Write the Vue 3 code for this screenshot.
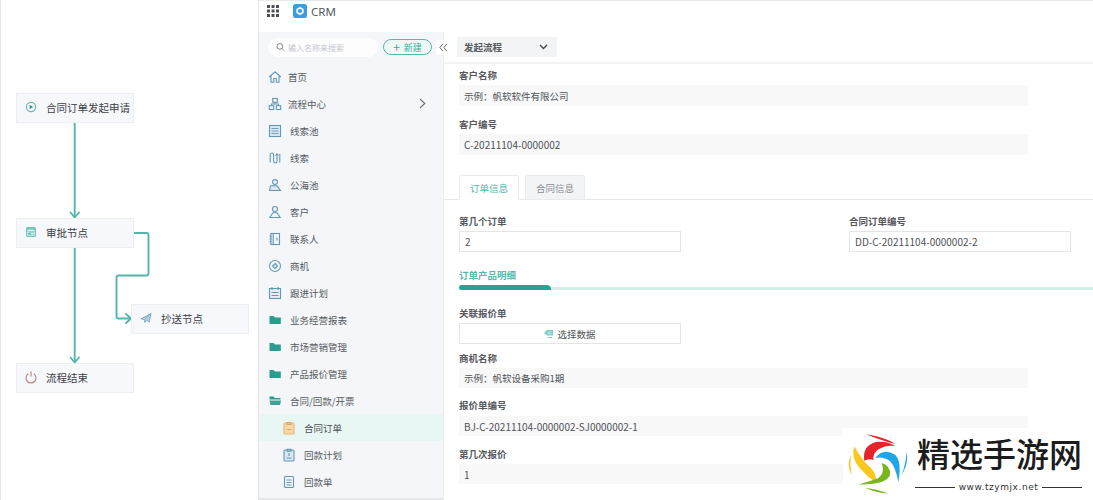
<script setup>
const menu = [
  { label: '首页', icon: 'home' },
  { label: '流程中心', icon: 'flow', arrow: true },
  { label: '线索池', icon: 'pool', wide: true },
  { label: '线索', icon: 'lead', wide: true },
  { label: '公海池', icon: 'sea', wide: true },
  { label: '客户', icon: 'user', wide: true },
  { label: '联系人', icon: 'book', wide: true },
  { label: '商机', icon: 'chance', wide: true },
  { label: '跟进计划', icon: 'plan', wide: true },
  { label: '业务经营报表', icon: 'folder', wide: true },
  { label: '市场营销管理', icon: 'folder', wide: true },
  { label: '产品报价管理', icon: 'folder', wide: true },
  { label: '合同/回款/开票', icon: 'folderOpen', wide: true },
  { label: '合同订单', icon: 'order', sub: true, active: true },
  { label: '回款计划', icon: 'clip', sub: true },
  { label: '回款单', icon: 'doc', sub: true }
]
</script>

<template>
  <div class="page">
    <section class="flow">
      <svg class="edges" width="258" height="500" viewBox="0 0 258 500" fill="none">
        <g stroke="#55b5ad" stroke-width="1.900" stroke-linejoin="round" stroke-linecap="round">
          <path d="M74.700 122V217" />
          <path d="M70.500 212.500L74.700 217.500L79 212.500" />
          <path d="M74.700 248V362" />
          <path d="M70.500 357.500L74.700 362.500L79 357.500" />
          <path d="M134 233H146.500Q148.500 233 148.500 235V273.500Q148.500 275.500 146.500 275.500H118.500Q116.500 275.500 116.500 277.500V316.500Q116.500 318.500 118.500 318.500H130" />
          <path d="M126 314L131 318.500L126 323" />
        </g>
      </svg>
      <div class="node n1">
        <svg width="14" height="14" viewBox="0 0 14 14" fill="none"><circle cx="7" cy="7" r="4.600" stroke="#68b9b4" stroke-width="1.200"/><path d="M5.600 4.700L9.300 7L5.600 9.300Z" fill="#3d8f9f"/></svg>
        <span>合同订单发起申请</span>
      </div>
      <div class="node n2">
        <svg width="14" height="14" viewBox="0 0 14 14" fill="none"><rect x="2" y="2" width="10" height="10" rx="1.500" fill="#72c5bb"/><path d="M3.500 5.300H10.500M7 8.800H10" stroke="#fff" stroke-width="1.100"/><rect x="3.500" y="7" width="7" height="3.500" stroke="#fff" stroke-width=".6"/></svg>
        <span>审批节点</span>
      </div>
      <div class="node n3">
        <svg width="14" height="14" viewBox="0 0 14 14" fill="none"><path d="M2 7.800L12 2.500L10.300 11L7.300 9.300L5.800 11.500L5.300 8.700Z" fill="#b6d2df" stroke="#6f9fb8" stroke-width=".8"/><path d="M5.300 8.700L12 2.500" stroke="#6f9fb8" stroke-width=".7"/></svg>
        <span>抄送节点</span>
      </div>
      <div class="node n4">
        <svg width="14" height="14" viewBox="0 0 14 14" fill="none"><path d="M4.200 3.800A5 5 0 1 0 9.800 3.800" stroke="#b98d88" stroke-width="1.200"/><path d="M7 1.500V6.500" stroke="#b98d88" stroke-width="1.200"/></svg>
        <span>流程结束</span>
      </div>
    </section>

    <div class="app">
      <header class="top">
        <svg class="grid" width="12" height="12" viewBox="0 0 12 12" fill="#4a4f57">
          <rect x="0" y="0" width="3" height="3"/><rect x="4.500" y="0" width="3" height="3"/><rect x="9" y="0" width="3" height="3"/>
          <rect x="0" y="4.500" width="3" height="3"/><rect x="4.500" y="4.500" width="3" height="3"/><rect x="9" y="4.500" width="3" height="3"/>
          <rect x="0" y="9" width="3" height="3"/><rect x="4.500" y="9" width="3" height="3"/><rect x="9" y="9" width="3" height="3"/>
        </svg>
        <svg class="brand" width="14" height="14" viewBox="0 0 14 14"><rect width="14" height="14" rx="2.500" fill="#3d9ce0"/><path d="M7 2.800L10.700 4.900V9.100L7 11.200L3.300 9.100V4.900Z" fill="#eaf5fd"/><circle cx="7" cy="7" r="2.100" fill="#3d9ce0"/></svg>
        <span class="crm">CRM</span>
      </header>

      <div class="body">
        <aside class="side">
          <div class="tools">
            <div class="search">
              <svg width="9" height="10" viewBox="0 0 10 10" fill="none"><circle cx="4.300" cy="4.300" r="3.200" stroke="#777" stroke-width="1"/><path d="M6.700 6.700L9 9" stroke="#777"/></svg>
              <span>输入名称来搜索</span>
            </div>
            <div class="new">
              <span class="plus">+</span><span>新建</span>
            </div>
          </div>
          <ul class="menu">
            <li v-for="m in menu" :key="m.label" :class="{ sub: m.sub, active: m.active, wide: m.wide }">
              <svg class="ico" width="14" height="14" viewBox="0 0 14 14" fill="none" stroke="#6398b3" stroke-width="1.100">
                <template v-if="m.icon === 'home'"><path d="M1.200 7L7 1.800L12.800 7M3 5.800V12.300H5.700V8.500H8.300V12.300H11V5.800"/></template>
                <template v-else-if="m.icon === 'flow'"><rect x="4.700" y="1.500" width="4.600" height="3.800" /><rect x="1.300" y="8.700" width="4.400" height="3.800"/><rect x="8.300" y="8.700" width="4.400" height="3.800"/><path d="M7 5.300V7H3.500V8.700M7 7H10.500V8.700"/></template>
                <template v-else-if="m.icon === 'pool'"><rect x="1.500" y="1.500" width="11" height="11" fill="#dce7f0"/><path d="M3.500 4.500H10.500M3.500 7H10.500M3.500 9.500H10.500" stroke-width=".9"/></template>
                <template v-else-if="m.icon === 'lead'"><path d="M2.200 11.500V4Q2.200 2 3.900 2T5.600 4V10Q5.600 12 7.300 12T9 10V3"/><path d="M7.500 4.500L9 2.800L10.500 4.500M11.800 3V11.500" /></template>
                <template v-else-if="m.icon === 'sea'"><circle cx="7" cy="4" r="2.400"/><path d="M2.500 7.800H9L12.500 12.500H1.500Z" fill="#dce7f0"/></template>
                <template v-else-if="m.icon === 'user'"><circle cx="7" cy="4" r="2.500"/><path d="M1.800 12.500L5 7.800H9L12.200 12.500Z"/></template>
                <template v-else-if="m.icon === 'book'"><rect x="2.800" y="1.500" width="8.700" height="11"/><path d="M5.200 1.500V12.500M1.500 4.200H3.800M1.500 7H3.800M1.500 9.800H3.800M9 5.500V8.500"/></template>
                <template v-else-if="m.icon === 'chance'"><circle cx="7" cy="7" r="5.500"/><path d="M7 4.500L9.500 7L7 9.500L4.500 7Z" fill="#dce7f0"/></template>
                <template v-else-if="m.icon === 'plan'"><rect x="1.500" y="2.500" width="11" height="10" fill="#e6eef4"/><path d="M4 1V4M10 1V4M3.500 6.500H10.500M3.500 9.500H10.500"/></template>
                <template v-else-if="m.icon === 'folder'"><path d="M1.500 3H5.500L7 4.500H12.800V11H1.500Z" fill="#2b9c8e" stroke="none"/></template>
                <template v-else-if="m.icon === 'folderOpen'"><path d="M1.500 2.500H5.500L7 4H12.500V5.500H1.500Z" fill="#2b9c8e" stroke="none"/><path d="M1.500 6.500H13L12 11H2.500Z" fill="#3aa597" stroke="none"/></template>
                <template v-else-if="m.icon === 'order'"><rect x="2" y="2" width="10" height="11" rx="1" fill="#f6d9a9" stroke="#eab976"/><path d="M5 1.500H9V3.500H5ZM4.800 8.500H9.200" stroke="#d9a45e"/></template>
                <template v-else-if="m.icon === 'clip'"><rect x="2" y="2" width="10" height="11" rx="1" fill="#dce7f0"/><path d="M5 1.200H9V3.200H5ZM4.500 10H9.500M7 5V8"/></template>
                <template v-else><rect x="2.500" y="1.500" width="9" height="11" rx="1"/><path d="M4.500 5H9.500M4.500 7.500H9.500M4.500 10H9.500"/></template>
              </svg>
              <span class="lbl">{{ m.label }}</span>
              <svg v-if="m.arrow" class="chev" width="7" height="11" viewBox="0 0 7 11" fill="none"><path d="M1 1L5.800 5.500L1 10" stroke="#6b6f75" stroke-width="1.100"/></svg>
            </li>
          </ul>
        </aside>

        <main class="main">
          <span class="collapse">
            <svg width="9" height="9" viewBox="0 0 9 9" fill="none"><path d="M4 .8L.8 4.500L4 8.200M8 .8L4.800 4.500L8 8.200" stroke="#666" stroke-width="1"/></svg>
          </span>
          <div class="bar">
            <div class="select">
              <span>发起流程</span>
              <svg width="9" height="6" viewBox="0 0 9 6" fill="none"><path d="M1 1L4.500 4.500L8 1" stroke="#444" stroke-width="1.300"/></svg>
            </div>
          </div>

          <div class="form">
            <label>客户名称</label>
            <div class="value cjk">示例：帆软软件有限公司</div>
            <label class="next">客户编号</label>
            <div class="value">C-20211104-0000002</div>
          </div>

          <div class="tabs">
            <div class="tab on">订单信息</div>
            <div class="tab">合同信息</div>
          </div>

          <div class="pair">
            <div class="col">
              <label>第几个订单</label>
              <div class="input">2</div>
            </div>
            <div class="col">
              <label>合同订单编号</label>
              <div class="input">DD-C-20211104-0000002-2</div>
            </div>
          </div>

          <div class="detail">
            <div class="detail-title">订单产品明细</div>
            <div class="track"><div class="thumb"></div></div>
          </div>

          <div class="lower">
            <label>关联报价单</label>
            <div class="input pick">
              <svg width="9" height="10" viewBox="0 0 9 10" fill="none"><path d="M0 4L3 1H9V6.500H3Z" fill="#7ccbc2"/><path d="M3.500 3H7.500M3.500 4.800H7.500" stroke="#fff" stroke-width=".6"/><path d="M3.500 8.500H8" stroke="#7ccbc2" stroke-width="1.100"/></svg>
              <span>选择数据</span>
            </div>
            <label class="l2">商机名称</label>
            <div class="value cjk short">示例：帆软设备采购1期</div>
            <label class="l3">报价单编号</label>
            <div class="value short q">BJ-C-20211104-0000002-SJ0000002-1</div>
            <label class="l4">第几次报价</label>
            <div class="value short">1</div>
          </div>
        </main>
      </div>
    </div>

    <div class="mark">
      <svg class="mark-logo" width="61" height="60" viewBox="20 28 184 180">
        <path d="M78 28Q110 42 165 58Q145 40 78 28Z" fill="#e4252b"/>
        <path d="M72 108Q66 62 108 52Q140 48 166 64Q138 60 118 72Q97 84 100 106Q85 100 72 108Z" fill="#e4252b"/>
        <path d="M42 65Q30 100 60 132Q80 155 105 172Q112 150 92 130Q66 108 42 65Z" fill="#f8c81c"/>
        <path d="M33 90Q16 122 35 153Q27 122 33 90Z" fill="#f8c81c"/>
        <path d="M105 100Q130 68 165 90Q186 110 175 172Q166 126 150 110Q130 95 105 100Z" fill="#1ea7e8"/>
        <path d="M200 82Q196 125 185 150Q206 120 200 82Z" fill="#1ea7e8"/>
        <path d="M125 115Q152 124 150 150Q140 182 55 180Q90 170 115 160Q135 145 125 115Z" fill="#7ab51d"/>
        <path d="M75 190Q110 193 145 207Q108 206 75 190Z" fill="#7ab51d"/>
      </svg>
      <div class="mark-text">
        <div class="mark-title">精选手游网</div>
        <div class="mark-url"><i></i><span>www.tzymjx.net</span><i></i></div>
      </div>
    </div>
  </div>
</template>

<style scoped>
.page {
  position: relative;
  width: 1093px;
  height: 500px;
  overflow: hidden;
  display: flex;
  background: #fff;
  color: #4b4f55;
  font-family: "Noto Sans CJK SC", "Noto Sans", sans-serif;
  font-size: 10px;
}
.flow {
  position: relative;
  flex: 0 0 259px;
  box-sizing: border-box;
  border-left: 1px solid #e6e7ea;
  border-right: 1px solid #e4e5e8;
}
.edges { position: absolute; left: -1px; top: 0; }
.node {
  position: absolute;
  box-sizing: border-box;
  width: 118px;
  height: 30px;
  padding: 0 0 2px 7px;
  display: flex;
  align-items: center;
  gap: 8px;
  background: #f6f8fb;
  border: 1px solid #eceef2;
  font-size: 10.500px;
  color: #3d4046;
  white-space: nowrap;
}
.n1 { left: 15px; top: 93px; }
.n2 { left: 15px; top: 218px; }
.n3 { left: 130px; top: 304px; }
.n4 { left: 15px; top: 363px; }

.app { flex: 1; display: flex; flex-direction: column; min-width: 0; }
.top {
  height: 32px;
  box-sizing: border-box;
  display: flex;
  align-items: flex-start;
  padding: 4px 0 0 8px;
  border-top: 1px solid #e9eaec;
  flex: none;
}
.brand { margin-left: 14px; margin-top: -1px; }
.crm { margin-left: 4px; font-size: 11.500px; line-height: 13px; color: #55595f; font-family: "Noto Sans", sans-serif; }
.body { flex: 1; display: flex; min-height: 0; }

.side {
  flex: 0 0 184px;
  background: #f4f6f9;
  box-sizing: border-box;
  padding-top: 5px;
  border-bottom: 2px solid #e4e6e9;
}
.tools { display: flex; align-items: center; height: 20px; padding-left: 9px; }
.search {
  width: 110px;
  height: 19px;
  border-radius: 10px;
  background: #fdfdfe;
  display: flex;
  align-items: center;
  gap: 3px;
  padding-left: 8px;
  box-sizing: border-box;
  color: #c3c7cc;
  font-size: 8px;
}
.new {
  margin-left: 5px;
  width: 49px;
  height: 16px;
  box-sizing: border-box;
  border: 1px solid #5fb5aa;
  border-radius: 9px;
  background: #eef8f6;
  display: flex;
  align-items: center;
  justify-content: center;
  gap: 4px;
  font-size: 9px;
  color: #3da99b;
}
.plus { font-size: 12px; line-height: 12px; }
.menu { list-style: none; margin: 6px 0 0; padding: 0; }
.menu li {
  position: relative;
  height: 27px;
  display: flex;
  align-items: center;
  padding-left: 9px;
  font-size: 9.500px;
  color: #555a60;
}
.menu li .lbl { margin-left: 6px; }
.menu li.wide .lbl { margin-left: 8px; }
.menu li.sub { padding-left: 23px; }
.menu li.sub .lbl { margin-left: 8px; }
.menu li.active { background: #e8f6f4; color: #4b4f55; }
.chev { position: absolute; left: 160px; top: 8px; }

.main { position: relative; flex: 1; min-width: 0; border-left: 1px solid #edeef0; }
.collapse {
  position: absolute;
  left: -8px;
  top: 8px;
  width: 15px;
  height: 15px;
  background: #fff;
  display: flex;
  align-items: center;
  justify-content: center;
}
.bar {
  height: 32px;
  box-sizing: border-box;
  padding: 5px 0 0 13px;
  border-bottom: 2px solid #f2f3f4;
}
.select {
  width: 100px;
  height: 20px;
  box-sizing: border-box;
  padding: 0 7px;
  display: flex;
  align-items: center;
  justify-content: space-between;
  background: #f3f4f5;
  font-size: 9.500px;
  font-weight: 700;
  color: #55585d;
}
.select svg { margin-right: 2px; }

label { display: block; font-size: 9.500px; font-weight: 700; color: #55585d; line-height: 14px; }
.form { padding: 4px 0 0 15px; height: 111px; box-sizing: border-box; }
.form .next { margin-top: 11px; }
.value {
  width: 569px;
  height: 21px;
  margin-top: 3px;
  padding-left: 5px;
  display: flex;
  align-items: center;
  box-sizing: border-box;
  background: #f8f8f8;
  font-size: 10px;
  color: #4f5358;
}
.value.cjk { font-size: 9.500px; }

.tabs {
  display: flex;
  gap: 6px;
  height: 24px;
  padding-left: 15px;
  border-bottom: 1px solid #e6e8ea;
}
.tab {
  width: 60px;
  height: 25px;
  box-sizing: border-box;
  border: 1px solid #e8eaec;
  background: #f3f4f6;
  display: flex;
  align-items: center;
  justify-content: center;
  color: #8a8e94;
  font-size: 9.500px;
  border-radius: 2px 2px 0 0;
}
.tab.on { background: #fff; border-bottom-color: #fff; color: #4fb6a9; }

.pair { display: flex; padding: 14px 0 0 15px; height: 68px; box-sizing: border-box; }
.col { flex: none; width: 390px; }
.input {
  height: 21px;
  width: 222px;
  margin-top: 3px;
  box-sizing: border-box;
  border: 1px solid #e3e5e8;
  display: flex;
  align-items: center;
  padding-left: 5px;
  font-size: 10px;
  color: #4f5358;
}
.detail { padding-left: 15px; }
.detail-title { font-size: 9.500px; font-weight: 700; color: #5db6ab; line-height: 14px; }
.track { height: 5px; margin-top: 3px; background: linear-gradient(transparent 2px, #d3efea 2px); }
.thumb { width: 92px; height: 5px; background: #26a594; border-radius: 3px 5px 0 3px; }

.lower { padding: 16px 0 0 15px; }
.pick { justify-content: center; gap: 4px; padding-left: 0; font-size: 9.500px; }
.l2 { margin-top: 7px; }
.l3 { margin-top: 10px; }
.l4 { margin-top: 11px; }
.lower .value { margin-top: 3px; }
.value.short { height: 20px; }
.lower .value.q { margin-top: 4px; }

.mark {
  position: absolute;
  left: 843px;
  top: 428px;
  width: 250px;
  height: 72px;
  background: #fff;
}
.mark-logo { position: absolute; left: 4px; top: 6px; }
.mark-text { position: absolute; left: 74px; top: 3px; width: 165px; }
.mark-title {
  font-family: "Noto Sans CJK SC", sans-serif;
  font-size: 33px;
  line-height: 44px;
  color: #1c1c1c;
  font-weight: 500;
  white-space: nowrap;
}
.mark-url {
  display: flex;
  align-items: center;
  gap: 4px;
  margin-left: -2px;
  margin-top: 6px;
  font-family: "DejaVu Sans", sans-serif;
  font-size: 9px;
  line-height: 12px;
  color: #333;
  letter-spacing: .55px;
  white-space: nowrap;
}
.mark-url i { flex: 1; height: 1px; background: #333; }
</style>
